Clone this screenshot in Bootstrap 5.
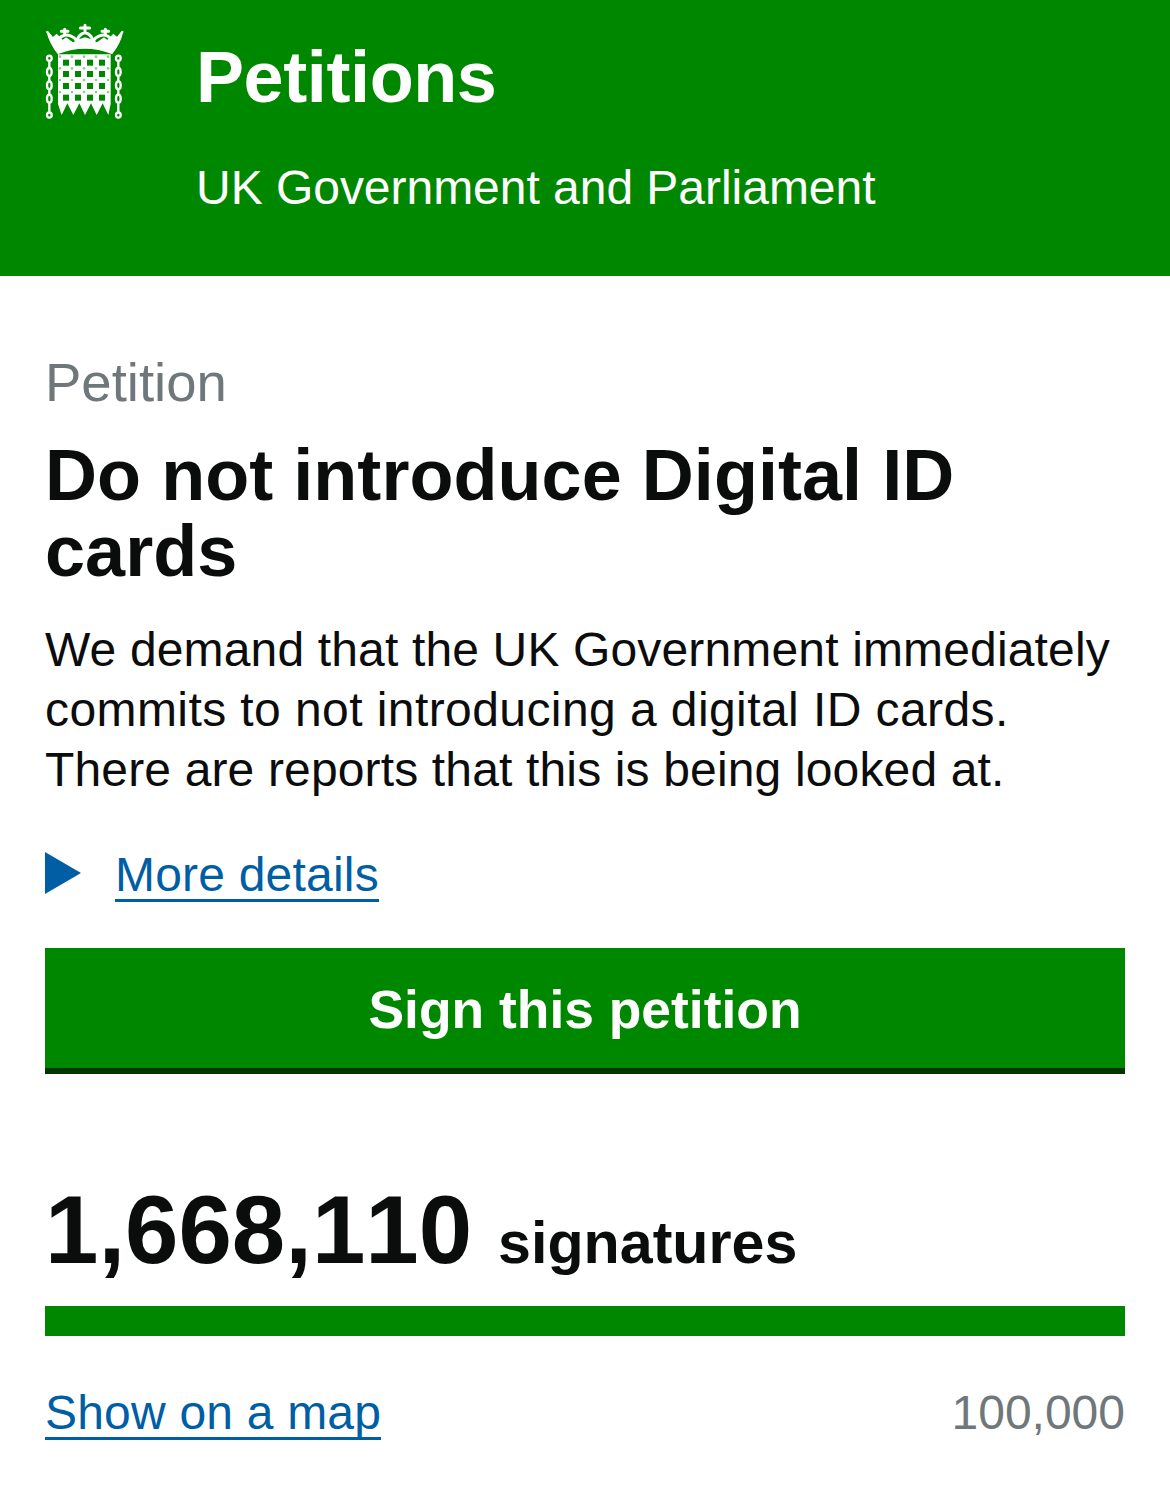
<!doctype html>
<html><head><meta charset="utf-8">
<link href="https://cdn.jsdelivr.net/npm/bootstrap@5.3.0/dist/css/bootstrap.min.css" rel="stylesheet">
<style>
body{font-family:"Liberation Sans",Arial,sans-serif;color:#0b0c0c;background:#fff}
.pt-head{background:#008700;height:276px;padding:0 45px;color:#fff}
.pt-crest{width:80px;height:100px;margin-top:22px;flex:none}
.pt-name{font-size:72px;font-weight:700;line-height:72px;margin-top:41px;letter-spacing:-.4px}
.pt-sub{font-size:48px;line-height:60px;margin-top:45px;letter-spacing:-.03px}
.pt-title-col{margin-left:71px}
.pt-main{padding:0 45px}
.pt-label{font-size:54.5px;line-height:60px;color:#6f777b;margin-top:77px}
.pt-h1{font-size:72px;font-weight:700;line-height:76px;margin:24px 0 0;letter-spacing:.05px}
.pt-desc{font-size:48px;line-height:60px;margin:31px 0 0;letter-spacing:.15px}
.pt-line-wide{letter-spacing:.42px}
.pt-more{margin-top:46px;height:60px}
.pt-arrow{margin-bottom:6px;flex:none;margin-right:34px}
.pt-link{color:#005ea5;font-size:48px;line-height:48px;text-decoration:none;border-bottom:3px solid #005ea5;letter-spacing:.2px}
.pt-btn{display:block;width:100%;height:126px;background:#008700;color:#fff;font-size:53.4px;font-weight:700;border:0;border-bottom:6px solid #003700;border-radius:0;margin-top:42px;padding-top:10px}
.pt-count{margin-top:106px;line-height:100px}
.pt-num{font-size:96px;font-weight:700;font-kerning:none}
.pt-word{font-size:59.2px;font-weight:700;margin-left:26px}
.pt-bar{height:30px;background:#008700;margin-top:13px}
.pt-foot{margin-top:53px;font-size:48px;line-height:48px;align-items:flex-start}
.pt-goal{color:#6f777b}
</style></head><body>
<header class="pt-head d-flex">
<svg class="pt-crest" viewBox="45 36 240 300">
<g fill="none" stroke="#fff" stroke-linecap="round">
<path fill="#fff" stroke-width="4" d="M52 66C58 92 70 112 84 130Q165 98 246 130C260 112 272 92 277 66L262 84L250 74L232 92L222 84L200 100L190 92L165 84L140 92L130 100L108 84L98 92L80 74L68 84Z"/>
<path stroke-width="9" d="M76 112C78 90 90 78 108 74C128 76 142 88 143 104M252 112C250 90 240 78 222 74C202 76 188 88 187 104M143 104C140 84 150 72 165 68C180 72 190 84 187 104M165 68V46M151 54H179M104 74V58M94 64H114M226 74V58M216 64H236"/>
<path stroke-width="7" d="M52 66L66 84M277 66L263 84"/>
<ellipse stroke-width="7" cx="58" cy="145" rx="7" ry="8"/><ellipse stroke-width="7" cx="58" cy="186" rx="7" ry="12"/><ellipse stroke-width="7" cx="58" cy="226" rx="7" ry="12"/><ellipse stroke-width="7" cx="58" cy="266" rx="7" ry="12"/><ellipse stroke-width="7" cx="58" cy="315" rx="7" ry="8"/>
<ellipse stroke-width="7" cx="265" cy="145" rx="7" ry="8"/><ellipse stroke-width="7" cx="265" cy="186" rx="7" ry="12"/><ellipse stroke-width="7" cx="265" cy="226" rx="7" ry="12"/><ellipse stroke-width="7" cx="265" cy="266" rx="7" ry="12"/><ellipse stroke-width="7" cx="265" cy="315" rx="7" ry="8"/>
<path stroke-width="7" d="M58 153V174M58 198V214M58 238V254M58 278V307M265 153V174M265 198V214M265 238V254M265 278V307"/>
</g>
<path fill="#fff" d="M84 133H242V282L235 315L218 280L200 315L183 280L165 315L148 280L130 315L112 280L95 315L84 282Z"/>
<g fill="#008700">
<rect x="99" y="149" width="18" height="18"/><rect x="135" y="149" width="18" height="18"/><rect x="171" y="149" width="18" height="18"/><rect x="207" y="149" width="18" height="18"/>
<rect x="99" y="183" width="18" height="18"/><rect x="135" y="183" width="18" height="18"/><rect x="171" y="183" width="18" height="18"/><rect x="207" y="183" width="18" height="18"/>
<rect x="99" y="219" width="18" height="18"/><rect x="135" y="219" width="18" height="18"/><rect x="171" y="219" width="18" height="18"/><rect x="207" y="219" width="18" height="18"/>
<rect x="99" y="254" width="18" height="18"/><rect x="135" y="254" width="18" height="18"/><rect x="171" y="254" width="18" height="18"/><rect x="207" y="254" width="18" height="18"/>
</g>
<g fill="#8fc98f">
<circle cx="90" cy="140" r="4"/><circle cx="126" cy="140" r="4"/><circle cx="162" cy="140" r="4"/><circle cx="198" cy="140" r="4"/><circle cx="234" cy="140" r="4"/>
<circle cx="90" cy="175" r="4"/><circle cx="126" cy="175" r="4"/><circle cx="162" cy="175" r="4"/><circle cx="198" cy="175" r="4"/><circle cx="234" cy="175" r="4"/>
<circle cx="90" cy="210" r="4"/><circle cx="126" cy="210" r="4"/><circle cx="162" cy="210" r="4"/><circle cx="198" cy="210" r="4"/><circle cx="234" cy="210" r="4"/>
<circle cx="90" cy="246" r="4"/><circle cx="126" cy="246" r="4"/><circle cx="162" cy="246" r="4"/><circle cx="198" cy="246" r="4"/><circle cx="234" cy="246" r="4"/>
</g>
</svg>
<div class="pt-title-col"><div class="pt-name">Petitions</div><div class="pt-sub">UK Government and Parliament</div></div>
</header>
<main class="pt-main">
<div class="pt-label">Petition</div>
<h1 class="pt-h1">Do not introduce Digital ID cards</h1>
<p class="pt-desc">We demand that the UK Government immediately <span class="pt-line-wide">commits to not introducing a digital ID cards.</span> There are reports that this is being looked at.</p>
<div class="pt-more d-flex align-items-center"><svg class="pt-arrow" width="36" height="42" viewBox="0 0 36 42" fill="#005ea5"><path d="M0 0L36 21L0 42Z"/></svg><a class="pt-link" href="#">More details</a></div>
<button class="btn pt-btn">Sign this petition</button>
<div class="pt-count d-flex align-items-baseline"><span class="pt-num">1,668,110</span><span class="pt-word">signatures</span></div>
<div class="pt-bar"></div>
<div class="pt-foot d-flex justify-content-between"><a class="pt-link" href="#">Show on a map</a><span class="pt-goal">100,000</span></div>
</main>
</body></html>
